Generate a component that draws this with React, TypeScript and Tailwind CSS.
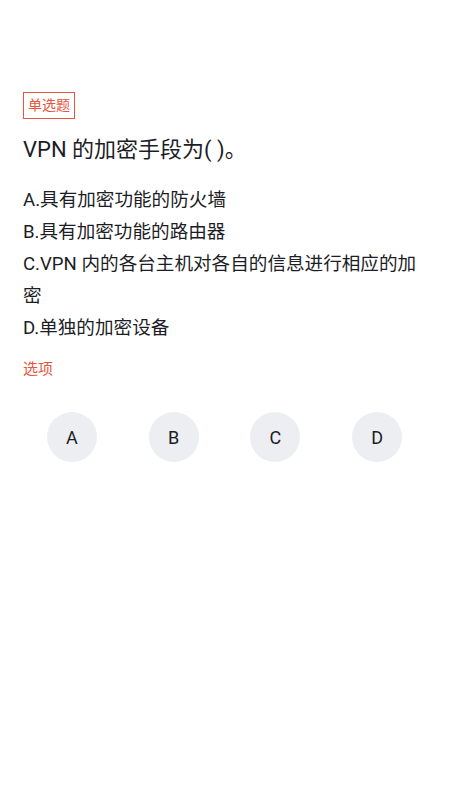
const options = [
  'A.具有加密功能的防火墙',
  'B.具有加密功能的路由器',
  'C.VPN 内的各台主机对各自的信息进行相应的加密',
  'D.单独的加密设备',
];

const letters = ['A', 'B', 'C', 'D'];

export default function App() {
  return (
    <div
      className="min-h-[800px] w-[450px] bg-white pl-[23px] pr-[22px] pt-[92px]"
      style={{ fontFamily: 'Roboto, "Noto Sans CJK SC", sans-serif' }}
    >
      {/* Question type tag */}
      <div className="flex">
        <span className="h-[27px] border border-[#e8553d] px-[4px] text-[14px] leading-[25px] text-[#e8553d]">
          单选题
        </span>
      </div>

      {/* Question */}
      <div className="mt-[16px] text-[22px] leading-[30px] text-[#1c1d26]">VPN 的加密手段为( )。</div>

      {/* Options */}
      <div className="mr-[8px] mt-[19px] text-[18.6px] leading-[32px] text-[#1c1d26]">
        {options.map((o) => (
          <div key={o}>{o}</div>
        ))}
      </div>

      <div className="mt-[14px] text-[15px] leading-[22px] text-[#e8553d]">选项</div>

      {/* Answer buttons */}
      <div className="-ml-[2px] mt-[32px] grid grid-cols-4">
        {letters.map((l) => (
          <div key={l} className="flex justify-center">
            <button className="grid size-[50px] place-items-center rounded-full bg-[#edeef1] text-[18px] text-[#1c1d26]">
              {l}
            </button>
          </div>
        ))}
      </div>
    </div>
  );
}
